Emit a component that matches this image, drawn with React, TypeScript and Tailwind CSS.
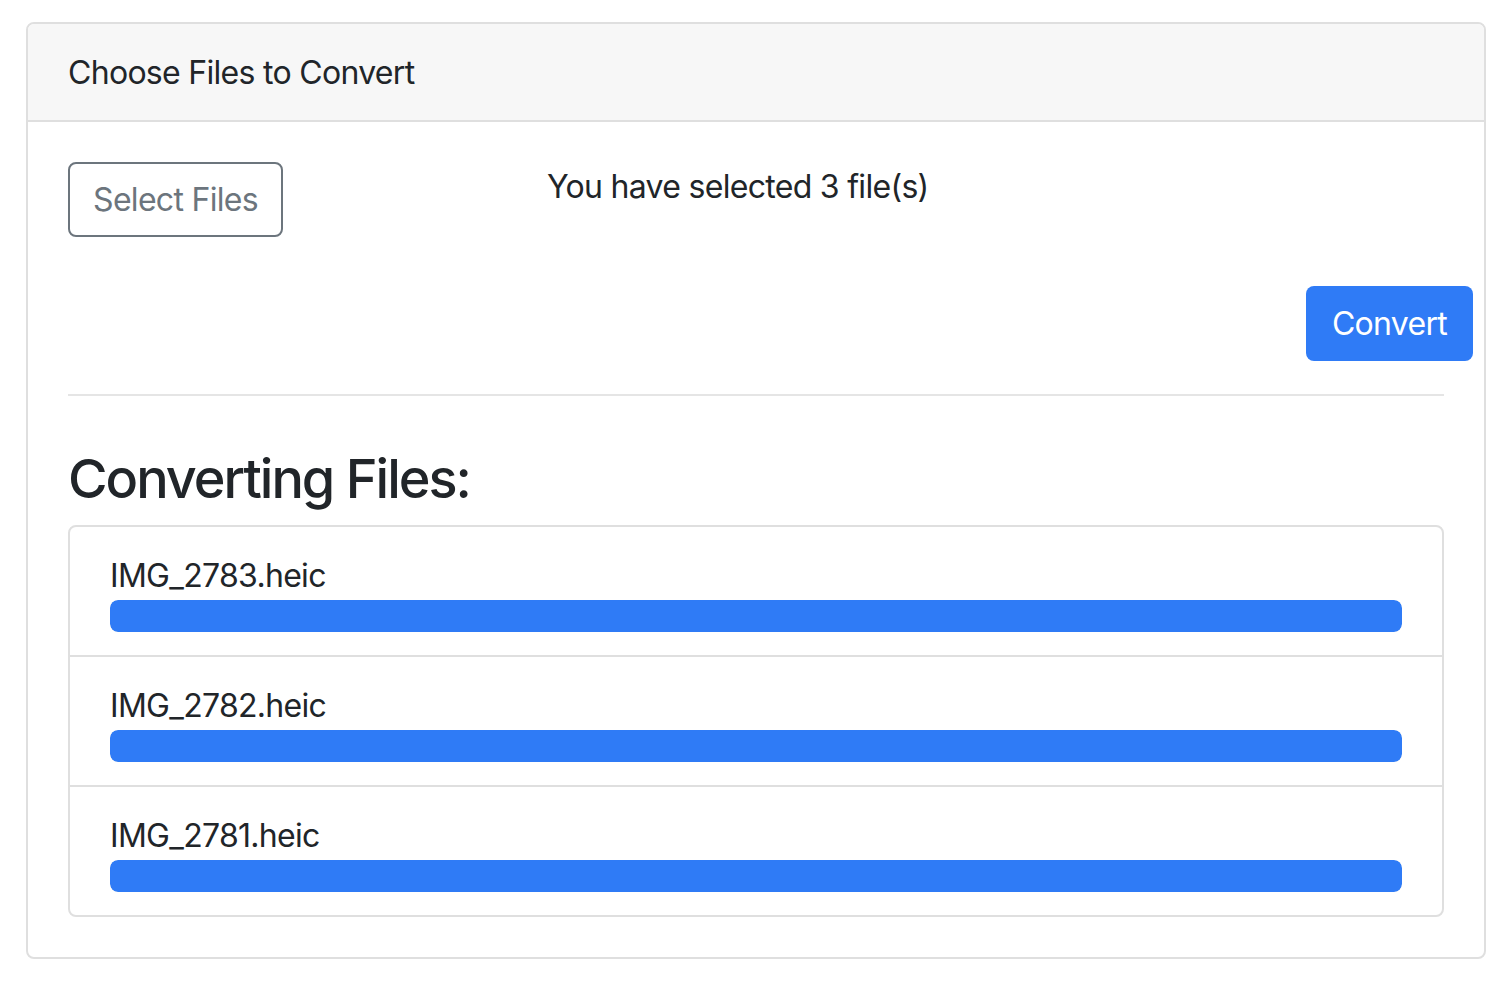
import React from "react";

const files = ["IMG_2783.heic", "IMG_2782.heic", "IMG_2781.heic"];

export default function App() {
  return (
    <div
      className="min-h-screen bg-white pt-[22px] pl-[26px] pr-[22px] text-[#212529] tracking-[-0.7px]"
      style={{ fontFamily: "Inter, 'Liberation Sans', sans-serif" }}
    >
      <div className="rounded-[8px] border-2 border-[#dfdfdf] bg-white">
        {/* header */}
        <div className="rounded-t-[6px] border-b-2 border-[#dfdfdf] bg-[#f7f7f7] px-[40px] pt-[25px] pb-[23px] text-[32px] leading-[48px]">
          Choose Files to Convert
        </div>

        {/* body */}
        <div className="p-[40px]">
          <div className="flex items-start">
            <button className="h-[75px] w-[215px] rounded-[8px] border-2 border-[#6c757d] text-[32px] text-[#6c757d]">
              Select Files
            </button>
            <p className="ml-[264px] mt-[1px] text-[32px] leading-[48px]">You have selected 3 file(s)</p>
          </div>

          <div className="mt-[49px] flex justify-end">
            <button className="-mr-[29px] h-[75px] w-[167px] rounded-[8px] bg-[#2f7bf6] text-[32px] text-white">
              Convert
            </button>
          </div>

          <hr className="mt-[33px] border-t-2 border-[#e5e5e5]" />

          <h3 className="mt-[49px] mb-[13px] text-[54px] font-medium leading-[67px] tracking-[-2px]">
            Converting Files:
          </h3>

          <ul className="rounded-[8px] border-2 border-[#dfdfdf]">
            {files.map((f, i) => (
              <li
                key={f}
                className={`px-[40px] pt-[25px] pb-[23px] ${i > 0 ? "border-t-2 border-[#dfdfdf]" : ""}`}
              >
                <div className="text-[32px] leading-[48px]">{f}</div>
                <div className="h-[32px] overflow-hidden rounded-[8px] bg-[#e9ecef]">
                  <div className="h-full rounded-[8px] bg-[#2f7bf6]" style={{ width: "100%" }} />
                </div>
              </li>
            ))}
          </ul>
        </div>
      </div>
    </div>
  );
}
